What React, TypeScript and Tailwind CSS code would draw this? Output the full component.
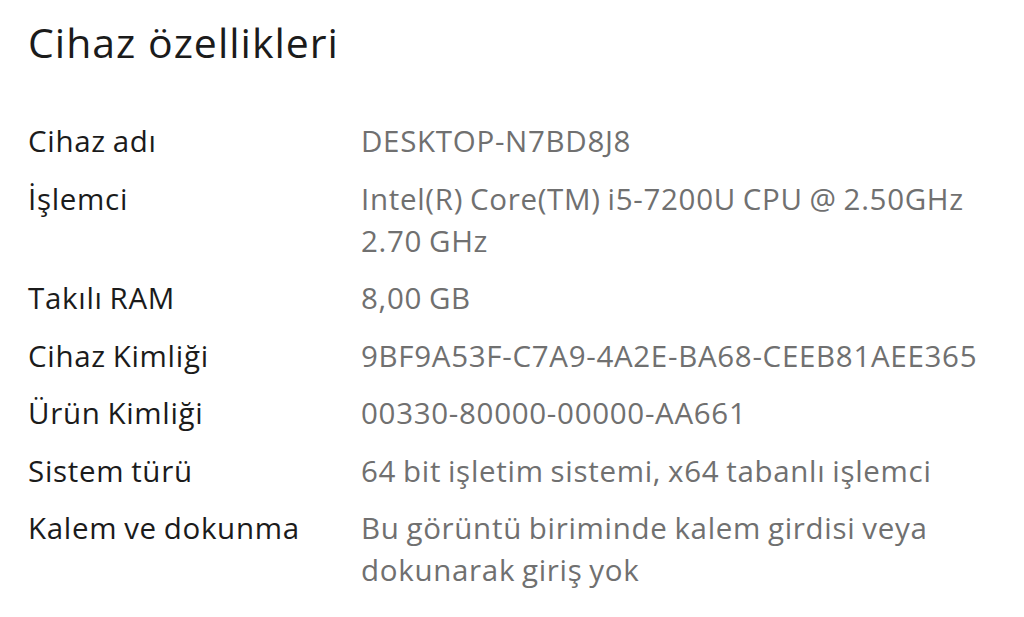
const specs: { label: string; value: string[] }[] = [
  { label: "Cihaz adı", value: ["DESKTOP-N7BD8J8"] },
  { label: "İşlemci", value: ["Intel(R) Core(TM) i5-7200U CPU @ 2.50GHz", "2.70 GHz"] },
  { label: "Takılı RAM", value: ["8,00 GB"] },
  { label: "Cihaz Kimliği", value: ["9BF9A53F-C7A9-4A2E-BA68-CEEB81AEE365"] },
  { label: "Ürün Kimliği", value: ["00330-80000-00000-AA661"] },
  { label: "Sistem türü", value: ["64 bit işletim sistemi, x64 tabanlı işlemci"] },
  { label: "Kalem ve dokunma", value: ["Bu görüntü biriminde kalem girdisi veya", "dokunarak giriş yok"] },
];

export default function App() {
  return (
    <main className="w-[1024px] h-[617px] bg-white overflow-hidden pl-[28px] pt-[12px] font-['Open_Sans',sans-serif]">
      <h1 className="text-[41px] leading-[60px] tracking-[1px] text-[#1b1b1b]">Cihaz özellikleri</h1>

      <div className="mt-[48px] grid grid-cols-[333px_1fr] gap-y-[15.5px] text-[29.5px] leading-[42px] tracking-[0.7px] [word-spacing:-1.5px]">
        {specs.map((s) => (
          <div key={s.label} className="contents">
            <div className="text-[#1b1b1b]">{s.label}</div>
            <div className="text-[#707070]">
              {s.value.map((line) => (
                <div key={line}>{line}</div>
              ))}
            </div>
          </div>
        ))}
      </div>
    </main>
  );
}
